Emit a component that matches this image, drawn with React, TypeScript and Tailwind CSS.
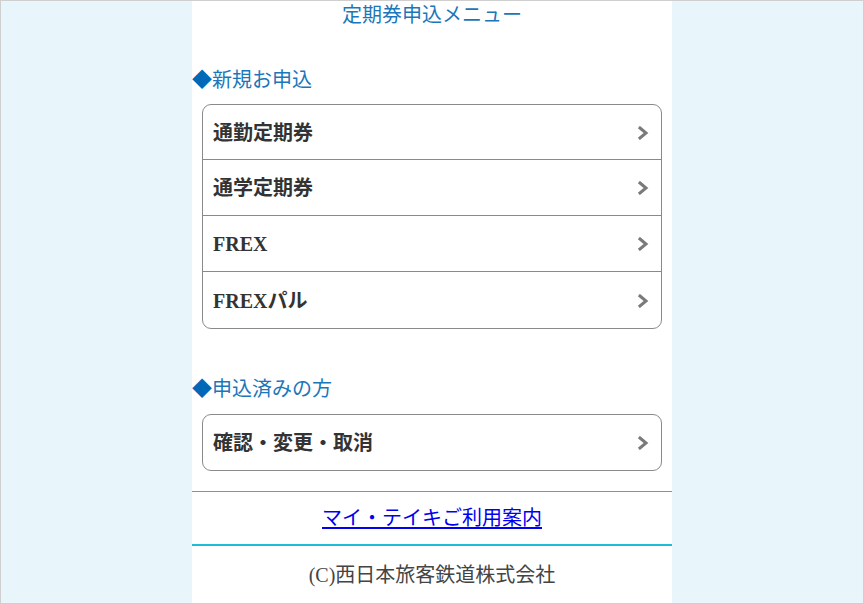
const FONT = "font-['Liberation_Serif','Noto_Sans_CJK_JP',serif]";

const NEW_ITEMS = ["通勤定期券", "通学定期券", "FREX", "FREXパル"];

function Chevron() {
  return (
    <svg width="12" height="14" viewBox="0 0 12 14" className="shrink-0">
      <polyline
        points="3,2 9,7 3,12"
        fill="none"
        stroke="#7a7a7a"
        strokeWidth="3"
        strokeLinecap="square"
      />
    </svg>
  );
}

function MenuBox({ items }: { items: string[] }) {
  return (
    <div className="mx-[10px] mt-[10px] rounded-[9px] border border-[#8a8a8a] divide-y divide-[#8a8a8a]">
      {items.map((label) => (
        <a
          key={label}
          href="#"
          className="flex h-[56px] first:h-[55px] items-center justify-between pl-[10px] pr-[12px] pt-px"
        >
          <span className="text-[20px] font-bold text-[#333]">{label}</span>
          <Chevron />
        </a>
      ))}
    </div>
  );
}

export default function App() {
  return (
    <div
      className={`h-[604px] w-[864px] overflow-hidden border border-[#cfcfcf] bg-[#e8f6fc] ${FONT}`}
    >
      <div className="mx-auto flex h-full w-[480px] flex-col bg-white">
        {/* Title */}
        <h1 className="-mt-px h-[30px] text-center text-[20px] leading-[30px] text-[#1b77b9]">
          定期券申込メニュー
        </h1>

        {/* New application */}
        <h2 className="mt-[34px] h-[30px] pt-px text-[20px] leading-[30px] text-[#1b77b9]">
          <span className="text-[#0068b7]">◆</span>新規お申込
        </h2>
        <MenuBox items={NEW_ITEMS} />

        {/* Already applied */}
        <h2 className="mt-[45px] h-[30px] text-[20px] leading-[30px] text-[#1b77b9]">
          <span className="text-[#0068b7]">◆</span>申込済みの方
        </h2>
        <MenuBox items={["確認・変更・取消"]} />

        {/* Guide link */}
        <div className="mt-[20px] h-px bg-[#1fbcd8]" />
        <div className="flex h-[52px] items-center justify-center">
          <a href="#" className="text-[20px] text-[#0000ee] underline underline-offset-2">
            マイ・テイキご利用案内
          </a>
        </div>
        <div className="h-[2px] bg-[#1fbcd8]" />

        {/* Footer */}
        <div className="flex h-[56px] items-center justify-center pt-[2px] text-[20px] text-[#444]">
          (C)西日本旅客鉄道株式会社
        </div>
      </div>
    </div>
  );
}
